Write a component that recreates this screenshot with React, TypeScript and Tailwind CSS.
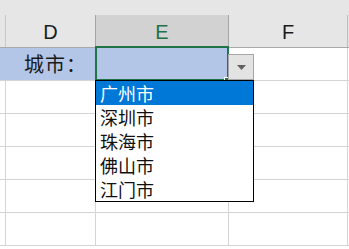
import React from "react";

const cjk = { fontFamily: '"Noto Sans CJK SC", "Noto Sans", sans-serif' };
const latin = { fontFamily: '"Liberation Sans", Arial, sans-serif' };

const cities = ["广州市", "深圳市", "珠海市", "佛山市", "江门市"];

function BodyRow() {
  return (
    <div className="flex h-[33px] border-b border-[#d4d4d4]">
      <div className="w-[6px] border-r border-[#d4d4d4]" />
      <div className="w-[90px] border-r border-[#d4d4d4]" />
      <div className="w-[133px] border-r border-[#d4d4d4]" />
      <div className="w-[119px] border-r border-[#d4d4d4]" />
    </div>
  );
}

export default function App() {
  return (
    <div className="relative w-[349px] h-[249px] overflow-hidden bg-white">
      {/* Column header */}
      <div className="h-[48px] bg-[#e6e6e6] border-b border-[#a9a9a9] flex flex-col">
        <div className="h-[15px]" />
        <div className="flex flex-1 text-[20px] text-[#1a1a1a]" style={latin}>
          <div className="w-[6px] border-r border-[#c8c8c8]" />
          <div className="w-[90px] border-r border-[#a5a5a5] flex items-center justify-center pt-[2px]">D</div>
          <div className="w-[133px] border-r border-[#a5a5a5] bg-[#d2d2d2] flex items-center justify-center pt-[2px] text-[#217346]">E</div>
          <div className="w-[119px] border-r border-[#bdbdbd] flex items-center justify-center pt-[2px]">F</div>
        </div>
      </div>

      {/* Row with label */}
      <div className="flex h-[33px] border-b border-[#d4d4d4]">
        <div className="w-[96px] bg-[#b4c6e7] flex items-center pl-[24px] text-[20px] text-[#1a1a1a] tracking-[1px]" style={cjk}>
          城市：
        </div>
        <div className="w-[133px] bg-[#b4c6e7] border-r border-[#d4d4d4]" />
        <div className="w-[119px] border-r border-[#d4d4d4]" />
      </div>
      <BodyRow />
      <BodyRow />
      <BodyRow />
      <BodyRow />
      <BodyRow />

      {/* Selection border */}
      <div className="absolute left-[95px] top-[46px] w-[134px] h-[35px] border-2 border-[#217346]" />
      <div className="absolute left-[224px] top-[77px] w-[6px] h-[6px] bg-[#217346] border border-white" />

      {/* Dropdown button */}
      <div className="absolute left-[228px] top-[54px] w-[26px] h-[26px] bg-[#e3e3e3] border border-[#a6a6a6] flex items-center justify-center">
        <svg width="9" height="5" viewBox="0 0 9 5">
          <polygon points="0,0 9,0 4.5,5" fill="#606060" />
        </svg>
      </div>

      {/* Dropdown list */}
      <div className="absolute left-[95px] top-[80px] w-[159px] h-[122px] border border-black bg-white flex flex-col" style={cjk}>
        {cities.map((c, i) => (
          <div
            key={c}
            className={
              "h-[24px] leading-[24px] pl-[4px] text-[18px] " +
              (i === 0 ? "bg-[#0078d7] text-white" : "text-[#111111]")
            }
          >
            {c}
          </div>
        ))}
      </div>
    </div>
  );
}
